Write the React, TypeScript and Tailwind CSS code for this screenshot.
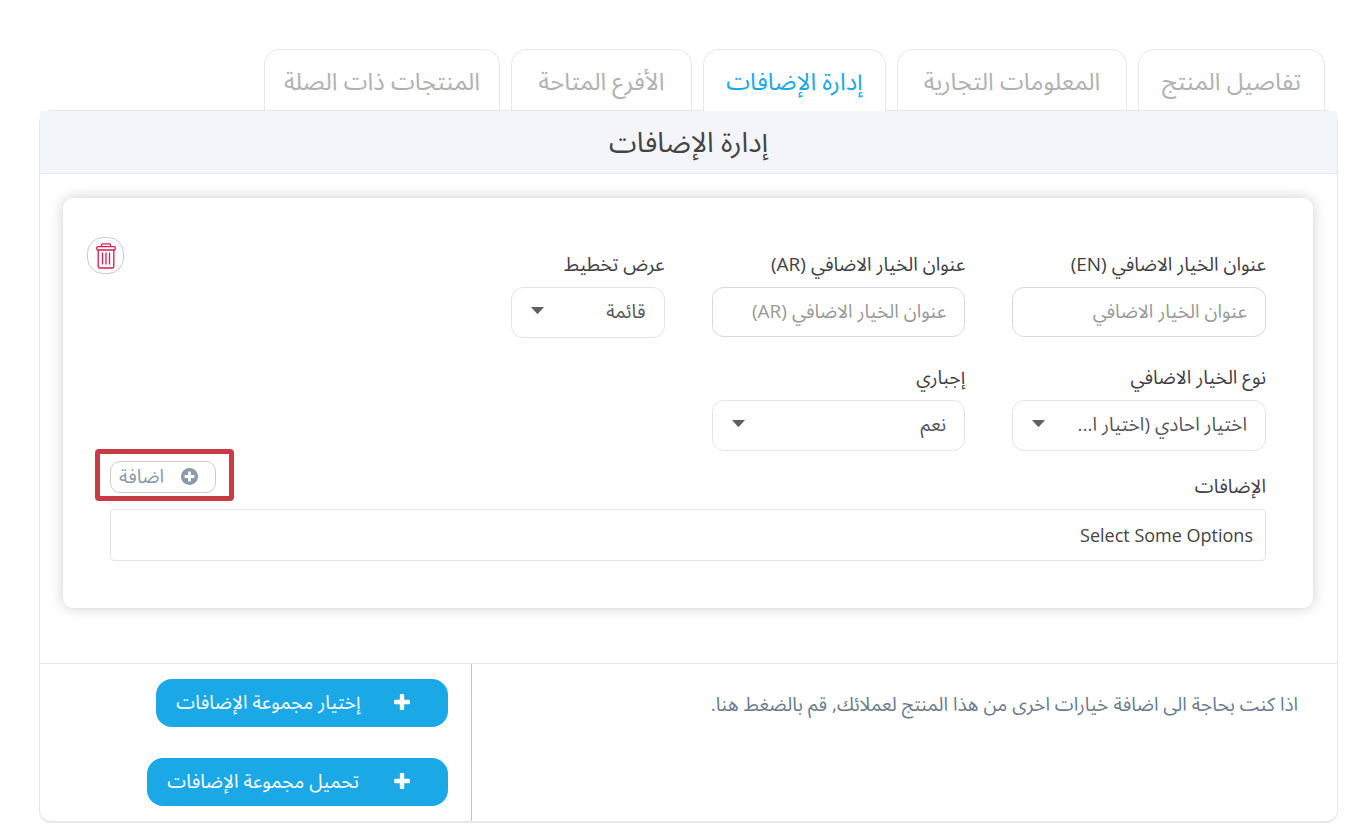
import { useState } from "react";

const TABS = [
  { id: "details", label: "تفاصيل المنتج", width: "min-w-[187px]" },
  { id: "commercial", label: "المعلومات التجارية", width: "min-w-[230px]" },
  { id: "addons", label: "إدارة الإضافات", width: "min-w-[183px]" },
  { id: "branches", label: "الأفرع المتاحة", width: "min-w-[181px]" },
  { id: "related", label: "المنتجات ذات الصلة", width: "min-w-[236px]" },
];

const LABEL = "block text-[19px] leading-[22px] text-[#3f4047] whitespace-nowrap";
const FIELD = "w-full rounded-xl border bg-white px-[18px] pb-0.5 text-[19px]";
const ACTION = "flex h-12 items-center justify-between rounded-2xl bg-[#1ba8e6] pr-[38px] pb-0.5 pl-5 text-[19px] text-white";

function SelectField({ id, label, options, span }: { id: string; label: string; options: string[]; span: string }) {
  return (
    <div className={span}>
      <label htmlFor={id} className={LABEL}>{label}</label>
      <div className="relative mt-3">
        <select id={id} className={`${FIELD} block h-[51px] appearance-none border-[#e2e5ec] text-[#55565b]`}>
          {options.map((o) => (
            <option key={o}>{o}</option>
          ))}
        </select>
        <svg viewBox="0 0 13 7" className="pointer-events-none absolute top-5 left-5 h-[7px] w-[13px]" fill="#5f5f5f">
          <path d="M0 0h13L7.200 6.600q-.7.7-1.400 0z" />
        </svg>
      </div>
    </div>
  );
}

function TextField({ id, label, placeholder }: { id: string; label: string; placeholder: string }) {
  return (
    <div className="col-span-3">
      <label htmlFor={id} className={LABEL}>{label}</label>
      <input
        id={id}
        type="text"
        placeholder={placeholder}
        className={`${FIELD} mt-3 block h-[50px] border-[#d9d9d9] placeholder:text-[#999]`}
      />
    </div>
  );
}

function TrashIcon() {
  return (
    <svg viewBox="0 0 20 26" className="h-[26px] w-5" fill="none" stroke="#d81e4f" strokeWidth="1.3">
      <path d="M5.5 3.500V2a1.200 1.200 0 0 1 1.200-1.200h6.600A1.200 1.200 0 0 1 14.500 2v1.500" />
      <rect x="0.800" y="3.600" width="18.400" height="3.400" rx="1" />
      <path d="M2.200 7v16.200a1.800 1.800 0 0 0 1.800 1.800h12a1.800 1.800 0 0 0 1.800-1.800V7" />
      <path d="M6.500 9.500v12M10 9.500v12M13.500 9.500v12" />
    </svg>
  );
}

function PlusIcon() {
  return (
    <svg viewBox="192 128 1408 1408" className="size-4" fill="currentColor">
      <path d="M1600 736v192q0 40-28 68t-68 28h-416v416q0 40-28 68t-68 28h-192q-40 0-68-28t-28-68v-416h-416q-40 0-68-28t-28-68v-192q0-40 28-68t68-28h416v-416q0-40 28-68t68-28h192q40 0 68 28t28 68v416h416q40 0 68 28t28 68z" />
    </svg>
  );
}

function PlusCircleIcon() {
  return (
    <svg viewBox="128 128 1536 1536" className="size-[17px]" fill="currentColor">
      <path d="M1344 960v-128q0-26-19-45t-45-19h-256v-256q0-26-19-45t-45-19h-128q-26 0-45 19t-19 45v256h-256q-26 0-45 19t-19 45v128q0 26 19 45t45 19h256v256q0 26 19 45t45 19h128q26 0 45-19t19-45v-256h256q26 0 45-19t19-45zm320-64q0 209-103 385.500t-279.500 279.500-385.500 103-385.500-103-279.500-279.500-103-385.500 103-385.500 279.500-279.500 385.500-103 385.500 103 279.500 279.500 103 385.500z" />
    </svg>
  );
}

export default function App() {
  const [active, setActive] = useState("addons");

  return (
    <div dir="rtl" className="bg-white pt-[49px] pr-[27px] pb-3 pl-[39px] font-['Open_Sans','Noto_Sans_Arabic','DejaVu_Sans',sans-serif]">
      {/* Tabs */}
      <nav className="flex gap-[11px] pr-[13px]">
        {TABS.map((tab) => (
          <button
            key={tab.id}
            type="button"
            onClick={() => setActive(tab.id)}
            className={`relative h-[62px] rounded-t-2xl border border-b-0 border-[#e8e8e8] text-2xl whitespace-nowrap ${tab.width} ${
              active === tab.id ? "z-10 bg-white text-[#1ba8e6]" : "text-[#b1b1b1]"
            }`}
          >
            {tab.label}
          </button>
        ))}
      </nav>

      <main className="-mt-px rounded-xl border border-b-2 border-[#e8e8e8]">
        <h1 className="flex h-[63px] items-center justify-center border-b border-[#e8e8e8] bg-[#f4f5fa] pb-0.5 text-[28px] text-[#444]">
          إدارة الإضافات
        </h1>

        {/* Option group */}
        <section className="mt-6 mr-6 mb-[55px] ml-[23px] rounded-[10px] px-[47px] pt-[55px] pb-[47px] shadow-[0_0_14px_rgba(0,0,0,0.2)]">
          <div className="grid grid-cols-12 gap-x-[47px] gap-y-7">
            <TextField id="title-en" label="عنوان الخيار الاضافي (EN)" placeholder="عنوان الخيار الاضافي" />
            <TextField id="title-ar" label="عنوان الخيار الاضافي (AR)" placeholder="عنوان الخيار الاضافي (AR)" />
            <SelectField id="layout" label="عرض تخطيط" options={["قائمة"]} span="col-span-2" />
            <button
              type="button"
              aria-label="حذف"
              className="col-start-12 -mt-4 -ml-[23px] flex size-[37px] items-center justify-center justify-self-end rounded-2xl border border-[#ccc]"
            >
              <TrashIcon />
            </button>
            <SelectField id="type" label="نوع الخيار الاضافي" options={["اختيار احادي (اختيار ا..."]} span="col-span-3 col-start-1" />
            <SelectField id="required" label="إجباري" options={["نعم", "لا"]} span="col-span-3" />
          </div>

          <div className="mt-[10px] mb-3 flex h-9 justify-between">
            <label htmlFor="addons" className={`${LABEL} self-end`}>الإضافات</label>
            <div className="relative h-8">
              <button type="button" className="flex h-8 w-[106px] items-center justify-between rounded-[10px] border border-[#ccc] pr-[17px] pb-0.5 pl-2 text-[19px] text-[#8c99a8]">
                <PlusCircleIcon />
                اضافة
              </button>
              <span className="pointer-events-none absolute -top-3 -right-[18px] -bottom-2 -left-[15px] rounded-sm border-5 border-[#c83a45]" />
            </div>
          </div>
          <input
            id="addons"
            type="text"
            placeholder="Select Some Options"
            className="block h-[52px] w-full rounded-sm border border-[#e2e5ec] px-3 text-lg placeholder:text-[#444]"
          />
        </section>

        {/* Footer */}
        <footer className="flex border-t border-[#e8e8e8]">
          <p className="w-2/3 pt-7 pr-[39px] text-[19px] leading-6 text-[#6b7b8c]">
            اذا كنت بحاجة الى اضافة خيارات اخرى من هذا المنتج لعملائك, قم بالضغط هنا.
          </p>
          <div className="flex w-1/3 flex-col items-start gap-[31px] border-r border-[#c2c4c8] py-[15px] pr-[23px]">
            <button type="button" className={`${ACTION} min-w-[292px]`}>
              <PlusIcon />
              إختيار مجموعة الإضافات
            </button>
            <button type="button" className={`${ACTION} min-w-[301px]`}>
              <PlusIcon />
              تحميل مجموعة الإضافات
            </button>
          </div>
        </footer>
      </main>
    </div>
  );
}
